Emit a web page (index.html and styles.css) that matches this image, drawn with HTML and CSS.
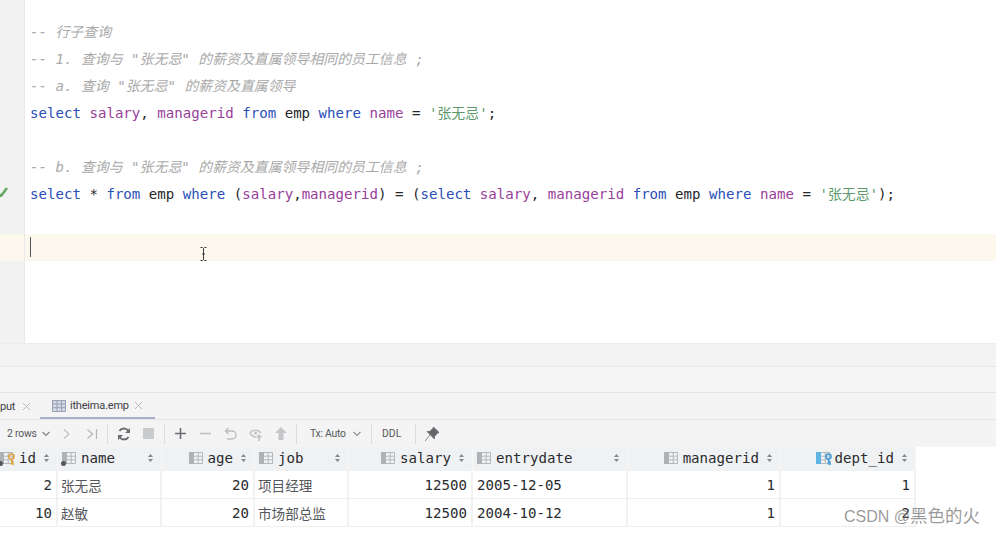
FILE: index.html
```html
<!DOCTYPE html>
<html lang="en">
<head>
    <meta charset="UTF-8">
    <title>itheima.emp</title>
    <link rel="stylesheet" href="styles.css">
</head>
<body>
    <svg class="defs" width="0" height="0">
        <symbol id="col" viewBox="0 0 14 12">
            <rect x="0" y="0" width="5" height="12" fill="#aeb1b6"/>
            <path d="M5 .5H13.5V11.5H5M5 4.2H13.5M5 7.8H13.5M9.2 .5V11.5" fill="none" stroke="#b4b7bb"/>
        </symbol>
        <symbol id="col-blue" viewBox="0 0 14 12">
            <rect x="0" y="0" width="5" height="12" fill="#5fb4e6"/>
            <path d="M5 .5H13.5V11.5H5M5 4.2H13.5M5 7.8H13.5M9.2 .5V11.5" fill="none" stroke="#b4b7bb"/>
        </symbol>
        <symbol id="sort" viewBox="0 0 5 8">
            <path d="M2.5 0L5 3H0ZM2.5 8L0 5H5Z" fill="#85888c"/>
        </symbol>
    </svg>

    <main class="ide">
        <section class="editor">
            <div class="line top"><div class="gutter"></div></div>
            <div class="line"><div class="gutter"></div><code class="comment">-- <span class="cjk">行子查询</span></code></div>
            <div class="line"><div class="gutter"></div><code class="comment">-- 1. <span class="cjk">查询与</span> "<span class="cjk">张无忌</span>" <span class="cjk">的薪资及直属领导相同的员工信息</span> ;</code></div>
            <div class="line"><div class="gutter"></div><code class="comment">-- a. <span class="cjk">查询</span> "<span class="cjk">张无忌</span>" <span class="cjk">的薪资及直属领导</span></code></div>
            <div class="line"><div class="gutter"></div><code><span class="kw">select</span> <span class="col">salary</span>, <span class="col">managerid</span> <span class="kw">from</span> emp <span class="kw">where</span> <span class="col">name</span> = <span class="str">'<span class="cjk">张无忌</span>'</span>;</code></div>
            <div class="line"><div class="gutter"></div></div>
            <div class="line"><div class="gutter"></div><code class="comment">-- b. <span class="cjk">查询与</span> "<span class="cjk">张无忌</span>" <span class="cjk">的薪资及直属领导相同的员工信息</span> ;</code></div>
            <div class="line">
                <div class="gutter">
                    <svg class="check" width="8" height="10" viewBox="0 0 8 10"><path d="M-2 6L1 9L7 1" fill="none" stroke="#68a964" stroke-width="2.6"/></svg>
                </div>
                <code><span class="kw">select</span> * <span class="kw">from</span> emp <span class="kw">where</span> (<span class="col">salary</span>,<span class="col">managerid</span>) = (<span class="kw">select</span> <span class="col">salary</span>, <span class="col">managerid</span> <span class="kw">from</span> emp <span class="kw">where</span> <span class="col">name</span> = <span class="str">'<span class="cjk">张无忌</span>'</span>);</code>
            </div>
            <div class="line"><div class="gutter"></div></div>
            <div class="line current"><div class="gutter"></div><span class="caret"></span></div>
            <div class="line rest"><div class="gutter"></div></div>
        </section>

        <div class="bar bar-status"></div>
        <div class="bar bar-title"></div>

        <nav class="tabs">
            <div class="tab tab-output">put
                <svg class="tab-close" width="9" height="9" viewBox="0 0 9 9"><path d="M1 1L8 8M8 1L1 8" stroke="#b6b8bc" fill="none"/></svg>
            </div>
            <div class="tab tab-active">
                <svg width="14" height="12" viewBox="0 0 14 12"><rect x=".5" y=".5" width="13" height="11" fill="#d3d9e6" stroke="#9aa3b5"/><path d="M.5 4H13.5M.5 7.7H13.5M5 .5V11.5M9.5 .5V11.5" stroke="#9aa3b5" fill="none"/></svg>
                itheima.emp
                <svg class="tab-close" width="9" height="9" viewBox="0 0 9 9"><path d="M1 1L8 8M8 1L1 8" stroke="#b6b8bc" fill="none"/></svg>
            </div>
        </nav>

        <div class="toolbar">
            <span class="rows">2 rows</span>
            <svg class="chev" width="18" height="6" viewBox="0 0 18 6"><path d="M6.5 1L10 4.5L13.5 1" fill="none" stroke="#7d8085" stroke-width="1.1"/></svg>
            <span class="tool"><svg width="12" height="12" viewBox="0 0 12 12"><path d="M3 1.5L8 6L3 10.5" fill="none" stroke="#c0c2c5" stroke-width="1.2"/></svg></span>
            <span class="tool"><svg width="12" height="12" viewBox="0 0 12 12"><path d="M1.5 1.5L6.5 6L1.5 10.5M10.5 1V11" fill="none" stroke="#b4b6b9" stroke-width="1.2"/></svg></span>
            <span class="sep"></span>
            <span class="tool"><svg width="14" height="14" viewBox="0 0 14 14"><path d="M12 5A5.4 5.4 0 0 0 2.4 4M2 9A5.4 5.4 0 0 0 11.6 10" fill="none" stroke="#686b6f" stroke-width="1.8"/><path d="M13 1V6H8ZM1 13V8H6Z" fill="#686b6f"/></svg></span>
            <span class="tool"><svg width="11" height="11" viewBox="0 0 11 11"><rect width="11" height="11" fill="#c9cacc"/></svg></span>
            <span class="sep"></span>
            <span class="tool"><svg width="11" height="11" viewBox="0 0 11 11"><path d="M5.5 0V11M0 5.5H11" stroke="#6b6e72" stroke-width="1.6"/></svg></span>
            <span class="tool"><svg width="11" height="11" viewBox="0 0 11 11"><path d="M0 5.5H11" stroke="#c0c2c5" stroke-width="1.6"/></svg></span>
            <span class="tool"><svg width="13" height="13" viewBox="0 0 13 13"><path d="M4.5 1L1.5 4L4.5 7M1.5 4H8A3.7 3.7 0 0 1 8 12H3" fill="none" stroke="#bbbdc0" stroke-width="1.4"/></svg></span>
            <span class="tool"><svg width="14" height="14" viewBox="0 0 14 14"><path d="M1 6C3 2.6 9 2.2 12 6" fill="none" stroke="#c4c6c9" stroke-width="1.6"/><path d="M1 6C3 9.5 5 10 7 10" fill="none" stroke="#c4c6c9" stroke-width="1.6"/><circle cx="6.5" cy="6" r="1.6" fill="#c4c6c9"/><path d="M10 7L13.5 10.5H11V14H9V10.5H6.5Z" fill="#c4c6c9"/></svg></span>
            <span class="tool"><svg width="12" height="13" viewBox="0 0 12 13"><path d="M6 0L12 6H8.5V13H3.5V6H0Z" fill="#c4c6c9"/></svg></span>
            <span class="sep"></span>
            <span class="tx">Tx: Auto</span>
            <svg class="chev" width="20" height="6" viewBox="0 0 20 6"><path d="M7.5 1L11 4.5L14.5 1" fill="none" stroke="#8d9095" stroke-width="1.1"/></svg>
            <span class="sep sep-tx"></span>
            <span class="ddl">DDL</span>
            <span class="sep sep-ddl"></span>
            <span class="tool"><svg width="14" height="14" viewBox="0 0 14 14"><path d="M8.5 0L14 5.5L12.5 6L9.5 9.5L9.5 12L2 4.5L4.5 4.5L8 1.5ZM5 8L0 14" fill="#64676b" stroke="#64676b" stroke-width=".8"/></svg></span>
        </div>

        <div class="grid">
            <div class="th right">
                <span class="key-wrap"><svg width="14" height="12"><use href="#col"/></svg><i class="dot"></i>
                    <svg class="key" width="7" height="12" viewBox="0 0 7 12"><circle cx="3.5" cy="3.5" r="2.5" fill="none" stroke="#e2a53e" stroke-width="1.6"/><path d="M3.5 6V11.5M3.5 9H6M3.5 11H6" stroke="#e2a53e" stroke-width="1.4" fill="none"/></svg>
                </span>
                <span class="name name-id">id</span><svg class="sort" width="5" height="8"><use href="#sort"/></svg>
            </div>
            <div class="th">
                <span class="key-wrap"><svg width="14" height="12"><use href="#col"/></svg><i class="dot"></i></span>
                <span class="name">name</span><svg class="sort push" width="5" height="8"><use href="#sort"/></svg>
            </div>
            <div class="th right"><svg width="14" height="12"><use href="#col"/></svg><span class="name">age</span><svg class="sort" width="5" height="8"><use href="#sort"/></svg></div>
            <div class="th"><svg width="14" height="12"><use href="#col"/></svg><span class="name">job</span><svg class="sort push" width="5" height="8"><use href="#sort"/></svg></div>
            <div class="th right"><svg width="14" height="12"><use href="#col"/></svg><span class="name">salary</span><svg class="sort" width="5" height="8"><use href="#sort"/></svg></div>
            <div class="th"><svg width="14" height="12"><use href="#col"/></svg><span class="name">entrydate</span><svg class="sort push" width="5" height="8"><use href="#sort"/></svg></div>
            <div class="th right"><svg width="14" height="12"><use href="#col"/></svg><span class="name">managerid</span><svg class="sort" width="5" height="8"><use href="#sort"/></svg></div>
            <div class="th right">
                <span class="key-wrap"><svg width="14" height="12"><use href="#col-blue"/></svg>
                    <svg class="key" width="7" height="12" viewBox="0 0 7 12"><circle cx="3.5" cy="3.5" r="2.5" fill="none" stroke="#3f9fdc" stroke-width="1.6"/><path d="M3.5 6V11.5M3.5 9H6M3.5 11H6" stroke="#3f9fdc" stroke-width="1.4" fill="none"/></svg>
                </span>
                <span class="name">dept_id</span><svg class="sort" width="5" height="8"><use href="#sort"/></svg>
            </div>

            <div class="td num">2</div>
            <div class="td zh">张无忌</div>
            <div class="td num">20</div>
            <div class="td zh">项目经理</div>
            <div class="td num">12500</div>
            <div class="td">2005-12-05</div>
            <div class="td num">1</div>
            <div class="td num">1</div>

            <div class="td num">10</div>
            <div class="td zh">赵敏</div>
            <div class="td num">20</div>
            <div class="td zh">市场部总监</div>
            <div class="td num">12500</div>
            <div class="td">2004-10-12</div>
            <div class="td num">1</div>
            <div class="td num">2</div>
        </div>
    </main>

    <!-- mouse pointer and watermark sit on top of the window -->
    <svg class="ibeam" width="7" height="14" viewBox="0 0 7 14"><path d="M.5 .5H2.5L3.5 1.5L4.5 .5H6.5M3.5 1.5V12.5M.5 13.5H2.5L3.5 12.5L4.5 13.5H6.5M2 7H5" fill="none" stroke="#3c3f42"/></svg>
    <div class="watermark">CSDN @<span class="watermark-zh">黑色的火</span></div>
</body>
</html>
```

FILE: styles.css
```css
body {
    margin: 0;
    background-color: white;
    font-family: "Liberation Mono", monospace;
    overflow: hidden;
}

.defs {
    display: none;
}

.ide {
    width: 996px;
    height: 533px;
    display: flex;
    flex-direction: column;
    overflow: hidden;
}

/* editor */
.editor {
    height: 343px;
    flex: none;
    display: flex;
    flex-direction: column;
    font-family: "DejaVu Sans Mono", "Noto Sans CJK SC", monospace;
    font-size: 14.1px;
    color: #25272a;
}

.line {
    height: 27px;
    flex: none;
    line-height: 27px;
    display: flex;
    white-space: pre;
}

.line.top {
    height: 18px;
}

.line.rest {
    flex: 1;
}

.line code {
    font-family: inherit;
    padding-left: 5px;
}

.gutter {
    width: 24px;
    flex: none;
    position: relative;
    background-color: #f2f2f3;
    border-right: 1px solid #e9e9ea;
}

.line.current {
    background-color: #fdf8ee;
}

.line.current .gutter {
    background-color: #fdf8ee;
}

.caret {
    width: 1px;
    height: 20px;
    margin: 3px 0 0 5px;
    background-color: #55585c;
}

.check {
    position: absolute;
    left: 0;
    top: 7px;
}

.cjk {
    font-family: "Noto Sans CJK SC", sans-serif;
    font-size: 13.9px;
}

.comment {
    color: #a9a9a9;
    font-style: italic;
}

.kw {
    color: #2a4fb8;
}

.col {
    color: #98409a;
}

.str {
    color: #5c9a6c;
}

/* grey bars under the editor */
.bar {
    flex: none;
    box-sizing: border-box;
    background-color: #f3f3f4;
    border-bottom: 1px solid #e6e6e7;
}

.bar-status {
    height: 24px;
    border-top: 1px solid #ececed;
}

.bar-title {
    height: 26px;
    background-color: #f5f5f6;
}

.tabs {
    height: 27px;
    flex: none;
    box-sizing: border-box;
    display: flex;
    background-color: #f4f4f5;
    border-bottom: 1px solid #e4e4e5;
    font-family: "Roboto", sans-serif;
    font-size: 11px;
    letter-spacing: -0.2px;
    color: #3d4044;
}

.tab {
    display: flex;
    align-items: center;
    height: 26px;
    box-sizing: border-box;
    padding-top: 1px;
}

.tab-output {
    width: 40px;
    flex: none;
}

.tab-output .tab-close {
    margin-left: 7px;
}

.tab-active {
    width: 115px;
    padding-left: 12px;
    gap: 4px;
    border-bottom: 2px solid #a7b0c4;
}

.tab-active .tab-close {
    margin-left: 1px;
}

.toolbar {
    height: 27px;
    flex: none;
    display: flex;
    align-items: center;
    padding-left: 7px;
    background-color: #f4f4f5;
    font-family: "Roboto", sans-serif;
    font-size: 10.4px;
    color: #55585c;
}

.rows {
    width: 29px;
    flex: none;
    letter-spacing: -0.2px;
    white-space: nowrap;
}

.chev {
    flex: none;
}

.tool {
    width: 25px;
    flex: none;
    display: flex;
    justify-content: center;
    align-items: center;
}

.sep {
    width: 1px;
    height: 20px;
    flex: none;
    margin: 0 3px;
    background-color: #dcdcde;
}

.sep-tx {
    margin: 0 0 0 5px;
}

.sep-ddl {
    margin: 0 3px 0 14px;
}

.tx {
    width: 36px;
    flex: none;
    margin-left: 10px;
    letter-spacing: -0.25px;
    white-space: nowrap;
}

.ddl {
    width: 19px;
    flex: none;
    margin-left: 10px;
}

/* result table */
.grid {
    display: grid;
    width: 916px;
    grid-template-columns: 58px 104px 93px 94px 124px 155px 153px 135px;
    grid-template-rows: 24px 28px 28px;
    font-size: 14.1px;
    font-family: "DejaVu Sans Mono", "Noto Sans CJK SC", monospace;
    color: #2a2c2f;
}

.th {
    display: flex;
    align-items: center;
    box-sizing: border-box;
    padding: 0 8px 2px 4px;
    overflow: hidden;
    background-color: #f0f1f2;
    border-right: 1px solid #f7f7f8;
}

.th.right {
    justify-content: flex-end;
}

.name {
    margin: 0 8px 0 5px;
}

.name-id {
    margin: 0 8px 0 6px;
}

.sort {
    flex: none;
}

.sort.push {
    margin-left: auto;
}

.key-wrap {
    position: relative;
    display: flex;
    flex: none;
}

.dot {
    position: absolute;
    left: -1px;
    bottom: -2px;
    width: 5px;
    height: 5px;
    border-radius: 50%;
    background-color: #55585c;
}

.key {
    position: absolute;
    right: -2px;
    top: 1px;
}

.td {
    line-height: 28px;
    box-sizing: border-box;
    padding: 0 4px;
    white-space: nowrap;
    border-right: 2px solid #f2f2f3;
    border-bottom: 1px solid #efeff0;
}

.td.num {
    text-align: right;
}

.td.zh {
    padding-left: 3px;
    font-family: "Noto Sans CJK SC", sans-serif;
    font-size: 13.6px;
    color: #55575b;
}

/* overlays */
.ibeam {
    position: absolute;
    left: 200px;
    top: 247px;
}

.watermark {
    position: absolute;
    left: 844px;
    top: 505px;
    font-family: "Liberation Sans", "Noto Sans CJK SC", sans-serif;
    font-size: 16px;
    line-height: 22px;
    color: rgba(120, 120, 120, 0.75);
    white-space: nowrap;
}

.watermark-zh {
    font-size: 17.5px;
}
```
